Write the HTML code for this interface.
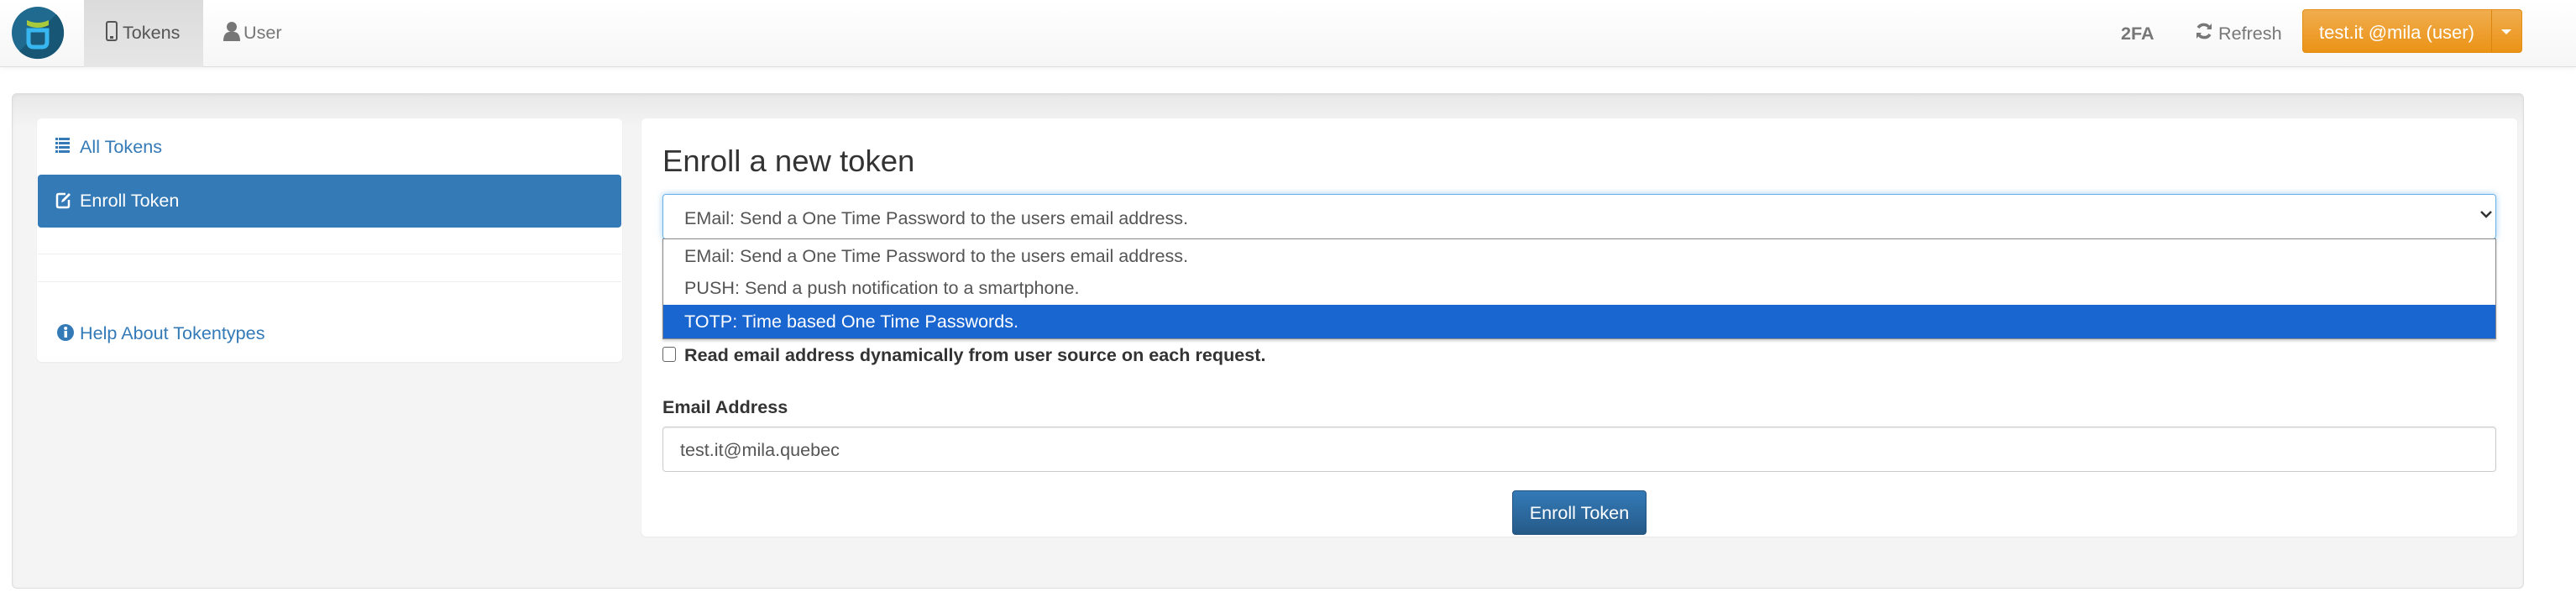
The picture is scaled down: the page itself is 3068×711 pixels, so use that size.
<!DOCTYPE html>
<html><head><meta charset="utf-8"><style>
*{box-sizing:border-box}
body{margin:0;width:3068px;height:711px;background:#fff;font-family:"Liberation Sans",Arial,sans-serif;font-size:21.6px;color:#333;position:relative;overflow:hidden}
.a{position:absolute}
.nav{left:0;top:0;width:3068px;height:80px;background:linear-gradient(#fff,#f6f6f6);border-bottom:1px solid #ddd;box-shadow:0 1px 6px rgba(0,0,0,.06)}
.well{left:14px;top:111px;width:2992px;height:590px;background:linear-gradient(#e8e8e8,#f4f4f4 40px);border:1px solid #ddd;border-radius:6px;box-shadow:inset 0 1px 3px rgba(0,0,0,.05)}
.panel{background:#fff;border-radius:6px;box-shadow:0 1px 2px rgba(0,0,0,.05)}
.link{color:#337ab7}
</style></head><body>
<div class="a nav"></div>
<svg class="a" style="left:12px;top:6px" width="66" height="66" viewBox="0 0 66 66"><circle cx="33" cy="33" r="31" fill="#1f6a8e"/><path d="M55 11 A31 31 0 0 1 11 55 Z" fill="#175674"/><path d="M20 18 Q33 24 46 18 L46 24 Q33 30 20 24Z" fill="#a7c93b"/><path d="M22 30 L44 30 L44 44 Q44 50 38 50 L28 50 Q22 50 22 44 Z" fill="#1a5a7a" stroke="#38b6f0" stroke-width="5"/></svg>
<div class="a" style="left:100px;top:0;width:142px;height:80px;background:linear-gradient(#dbdbdb,#e6e6e6)"></div>
<svg class="a" style="left:126px;top:25px" width="14" height="24" viewBox="0 0 14 24"><rect x="1" y="1" width="12" height="22" rx="2" fill="none" stroke="#555" stroke-width="2"/><rect x="5" y="18" width="4" height="3" fill="#555"/></svg>
<div class="a" style="left:146px;top:26px;color:#555">Tokens</div>
<svg class="a" style="left:266px;top:25px" width="20" height="24" viewBox="0 0 20 24"><circle cx="10" cy="7" r="6" fill="#777"/><path d="M0 24 Q0 12 10 13 Q20 12 20 24Z" fill="#777"/></svg>
<div class="a" style="left:290px;top:26px;color:#777">User</div>
<div class="a" style="left:2526px;top:27px;color:#777;font-weight:bold">2FA</div>
<svg class="a" style="left:2614px;top:25px" width="22" height="24" viewBox="0 0 22 24"><path d="M18 9 A8 8 0 0 0 4 8" fill="none" stroke="#777" stroke-width="3.5"/><path d="M14 10 L20 10 L20 3Z" fill="#777"/><path d="M4 15 A8 8 0 0 0 18 16" fill="none" stroke="#777" stroke-width="3.5"/><path d="M8 14 L2 14 L2 21Z" fill="#777"/></svg>
<div class="a" style="left:2642px;top:27px;color:#777">Refresh</div>
<div class="a" style="left:2742px;top:11px;width:262px;height:52px;border-radius:4px;background:linear-gradient(#f0ad4e,#eb9316);border:1px solid #e38d13"></div>
<div class="a" style="left:2967px;top:12px;width:1px;height:50px;background:#d9850f"></div>
<div class="a" style="left:2741px;top:26px;width:227px;text-align:center;color:#fff;font-size:22px">test.it @mila (user)</div>
<div class="a" style="left:2979px;top:35px;width:0;height:0;border-left:6px solid transparent;border-right:6px solid transparent;border-top:6px solid #fff"></div>

<div class="a well"></div>
<div class="a panel" style="left:44px;top:141px;width:697px;height:290px"></div>
<svg class="a" style="left:66px;top:163px" width="17" height="20" viewBox="0 0 17 20"><g fill="#337ab7"><rect y="1" width="3" height="3"/><rect x="4" y="1" width="13" height="3"/><rect y="6" width="3" height="3"/><rect x="4" y="6" width="13" height="3"/><rect y="11" width="3" height="3"/><rect x="4" y="11" width="13" height="3"/><rect y="16" width="3" height="3"/><rect x="4" y="16" width="13" height="3"/></g></svg>
<div class="a link" style="left:95px;top:162px">All Tokens</div>
<div class="a" style="left:45px;top:208px;width:695px;height:63px;background:#337ab7;border-radius:4px"></div>
<svg class="a" style="left:66px;top:227px" width="20" height="22" viewBox="0 0 20 22"><path d="M12 4 H4 Q2 4 2 6 V18 Q2 20 4 20 H14 Q16 20 16 18 V11" fill="none" stroke="#fff" stroke-width="2.5"/><path d="M7 14 L8 11 L16 3 L18 5 L10 13Z" fill="#fff"/></svg>
<div class="a" style="left:95px;top:226px;color:#fff">Enroll Token</div>
<div class="a" style="left:45px;top:302px;width:695px;height:1px;background:#eee"></div>
<div class="a" style="left:45px;top:335px;width:695px;height:1px;background:#eee"></div>
<svg class="a" style="left:67px;top:385px" width="22" height="22" viewBox="0 0 22 22"><circle cx="11" cy="11" r="10" fill="#337ab7"/><rect x="9.5" y="9" width="3.5" height="8" fill="#fff"/><circle cx="11.2" cy="6" r="2" fill="#fff"/></svg>
<div class="a link" style="left:95px;top:384px">Help About Tokentypes</div>

<div class="a panel" style="left:764px;top:141px;width:2234px;height:498px"></div>
<div class="a" style="left:789px;top:171px;font-size:36.5px">Enroll a new token</div>
<div class="a" style="left:789px;top:231px;width:2184px;height:54px;border:1px solid #66afe9;border-radius:4px;box-shadow:0 0 8px rgba(102,175,233,.6)"></div>
<div class="a" style="left:815px;top:247px;color:#555">EMail: Send a One Time Password to the users email address.</div>
<svg class="a" style="left:2954px;top:251px" width="14" height="10" viewBox="0 0 14 10"><path d="M1 1 L7 7 L13 1" fill="none" stroke="#333" stroke-width="2.5"/></svg>
<div class="a" style="left:789px;top:284px;width:2184px;height:120px;background:#fff;border:1px solid #888;box-shadow:0 2px 3px rgba(0,0,0,.2)"></div>
<div class="a" style="left:815px;top:292px;color:#555">EMail: Send a One Time Password to the users email address.</div>
<div class="a" style="left:815px;top:330px;color:#555">PUSH: Send a push notification to a smartphone.</div>
<div class="a" style="left:790px;top:363px;width:2182px;height:40px;background:#1a66d1"></div>
<div class="a" style="left:815px;top:370px;color:#fff">TOTP: Time based One Time Passwords.</div>
<div class="a" style="left:789px;top:413px;width:16px;height:18px;border:1.5px solid #666;border-radius:3px;background:#fff"></div>
<div class="a" style="left:815px;top:410px;font-weight:bold">Read email address dynamically from user source on each request.</div>
<div class="a" style="left:789px;top:472px;font-weight:bold">Email Address</div>
<div class="a" style="left:789px;top:508px;width:2184px;height:54px;border:1px solid #ccc;border-radius:4px;box-shadow:inset 0 1px 1px rgba(0,0,0,.075)"></div>
<div class="a" style="left:810px;top:523px;color:#555">test.it@mila.quebec</div>
<div class="a" style="left:1801px;top:584px;width:160px;height:53px;border-radius:4px;background:linear-gradient(#337ab7,#265a88);border:1px solid #245580;color:#fff;text-align:center;line-height:51px">Enroll Token</div>
</body></html>
